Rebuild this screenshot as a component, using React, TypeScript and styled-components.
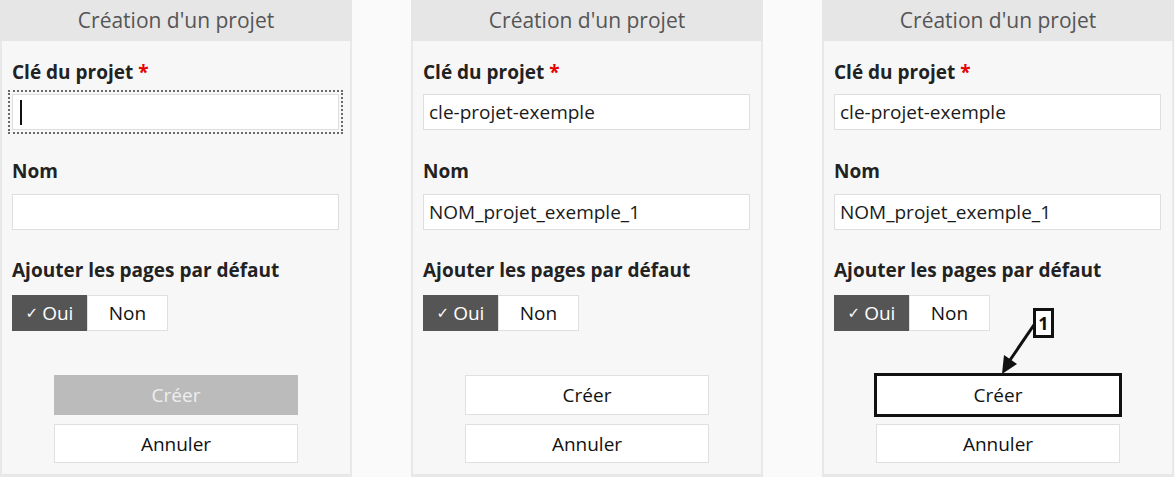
import React from "react";
import styled, { createGlobalStyle, css } from "styled-components";

const GlobalStyle = createGlobalStyle`
  html, body {
    margin: 0;
    padding: 0;
    background: #fafafa;
    font-family: "Open Sans", "Noto Sans", sans-serif;
  }
`;

const Page = styled.div`
  display: flex;
  gap: 59px;
  width: 1175px;
  height: 477px;
  overflow: hidden;
`;

const Card = styled.section<{ $width: number }>`
  display: flex;
  flex-direction: column;
  flex: 0 0 ${(p) => p.$width}px;
`;

const Header = styled.h2`
  flex-shrink: 0;
  margin: 0;
  height: 41px;
  line-height: 41px;
  background: #e6e6e6;
  color: #555;
  font-size: 21px;
  font-weight: 400;
  text-align: center;
`;

const Body = styled.div`
  position: relative;
  flex: 1;
  display: flex;
  flex-direction: column;
  box-sizing: border-box;
  padding: 19px 11px 11px 10px;
  background: #f7f7f7;
  border: 2px solid #e8e8e8;
  border-top: none;
  border-bottom-width: 3px;

  & > * {
    flex-shrink: 0;
  }
`;

const Label = styled.div<{ $gap: number }>`
  margin-top: ${(p) => p.$gap}px;
  font-size: 19px;
  line-height: 24px;
  font-weight: 700;
  color: #222;
`;

const Required = styled.span`
  color: #e60000;
`;

const Field = styled.div<{ $focused?: boolean; $gap: number }>`
  display: flex;
  align-items: center;
  box-sizing: border-box;
  width: 327px;
  height: 36px;
  margin-top: ${(p) => p.$gap}px;
  padding: 0 5px;
  background: #fff;
  border: 1px solid #dedede;
  font-size: 19px;
  color: #1a1a1a;
  ${(p) =>
    p.$focused &&
    css`
      outline: 2px dotted #6a6a6a;
      outline-offset: 2px;
    `}
`;

const Caret = styled.span`
  width: 2px;
  height: 25px;
  margin-left: 2px;
  background: #111;
`;

const Toggle = styled.div`
  display: flex;
  margin-top: 13px;
  height: 36px;
`;

const ToggleOption = styled.div<{ $active?: boolean; $width: number }>`
  display: flex;
  align-items: center;
  justify-content: center;
  box-sizing: border-box;
  width: ${(p) => p.$width}px;
  font-size: 19px;
  ${(p) =>
    p.$active
      ? css`
          background: #555;
          color: #fff;
        `
      : css`
          background: #fff;
          color: #111;
          border: 1px solid #e0e0e0;
        `}
`;

const Check = styled.span`
  font-family: "DejaVu Sans", sans-serif;
  font-size: 15px;
  font-weight: 700;
  margin-right: 4px;
`;

const Actions = styled.div`
  display: flex;
  flex-direction: column;
  align-items: center;
  gap: 9px;
  margin-top: 44px;
  margin-left: 1px;
`;

const Button = styled.button<{ $disabled?: boolean; $marked?: boolean; $tall?: boolean }>`
  box-sizing: border-box;
  width: 244px;
  height: ${(p) => (p.$tall ? 40 : 39)}px;
  margin: 0;
  font-family: inherit;
  font-size: 19px;
  cursor: pointer;
  ${(p) =>
    p.$disabled
      ? css`
          background: #bbb;
          color: #eee;
          border: none;
        `
      : css`
          background: #fff;
          color: #111;
          border: 1px solid #e0e0e0;
        `}
  ${(p) =>
    p.$marked &&
    css`
      outline: 3px solid #111;
      outline-offset: -1px;
    `}
`;

const Callout = styled.div`
  position: absolute;
  left: 209px;
  top: 267px;
  width: 21px;
  height: 30px;
  box-sizing: border-box;
  border: 3px solid #111;
  background: #fff;
  font-size: 18px;
  font-weight: 700;
  line-height: 24px;
  text-align: center;
  color: #111;
`;

const Arrow = styled.svg`
  position: absolute;
  left: 170px;
  top: 272px;
`;

type PanelProps = {
  width: number;
  filled?: boolean;
  focused?: boolean;
  marked?: boolean;
};

const Panel: React.FC<PanelProps> = ({ width, filled, focused, marked }) => (
  <Card $width={width}>
    <Header>Création d'un projet</Header>
    <Body>
      <Label $gap={0}>
        Clé du projet <Required>*</Required>
      </Label>
      <Field $gap={10} $focused={focused}>
        {focused ? <Caret /> : filled && "cle-projet-exemple"}
      </Field>
      <Label $gap={29}>Nom</Label>
      <Field $gap={11}>{filled && "NOM_projet_exemple_1"}</Field>
      <Label $gap={28}>Ajouter les pages par défaut</Label>
      <Toggle>
        <ToggleOption $active $width={75}>
          <Check>✓</Check>Oui
        </ToggleOption>
        <ToggleOption $width={81}>Non</ToggleOption>
      </Toggle>
      <Actions>
        <Button $tall $disabled={!filled} $marked={marked}>
          Créer
        </Button>
        <Button>Annuler</Button>
      </Actions>
      {marked && (
        <>
          <Arrow width="60" height="64" viewBox="0 0 60 64">
            <line x1="44" y1="6" x2="14" y2="50" stroke="#111" strokeWidth="3" />
            <polygon points="8,61 10,42 23,51" fill="#111" />
          </Arrow>
          <Callout>1</Callout>
        </>
      )}
    </Body>
  </Card>
);

export default function App() {
  return (
    <>
      <GlobalStyle />
      <Page>
        <Panel width={352} focused />
        <Panel width={351} filled />
        <Panel width={352} filled marked />
      </Page>
    </>
  );
}
